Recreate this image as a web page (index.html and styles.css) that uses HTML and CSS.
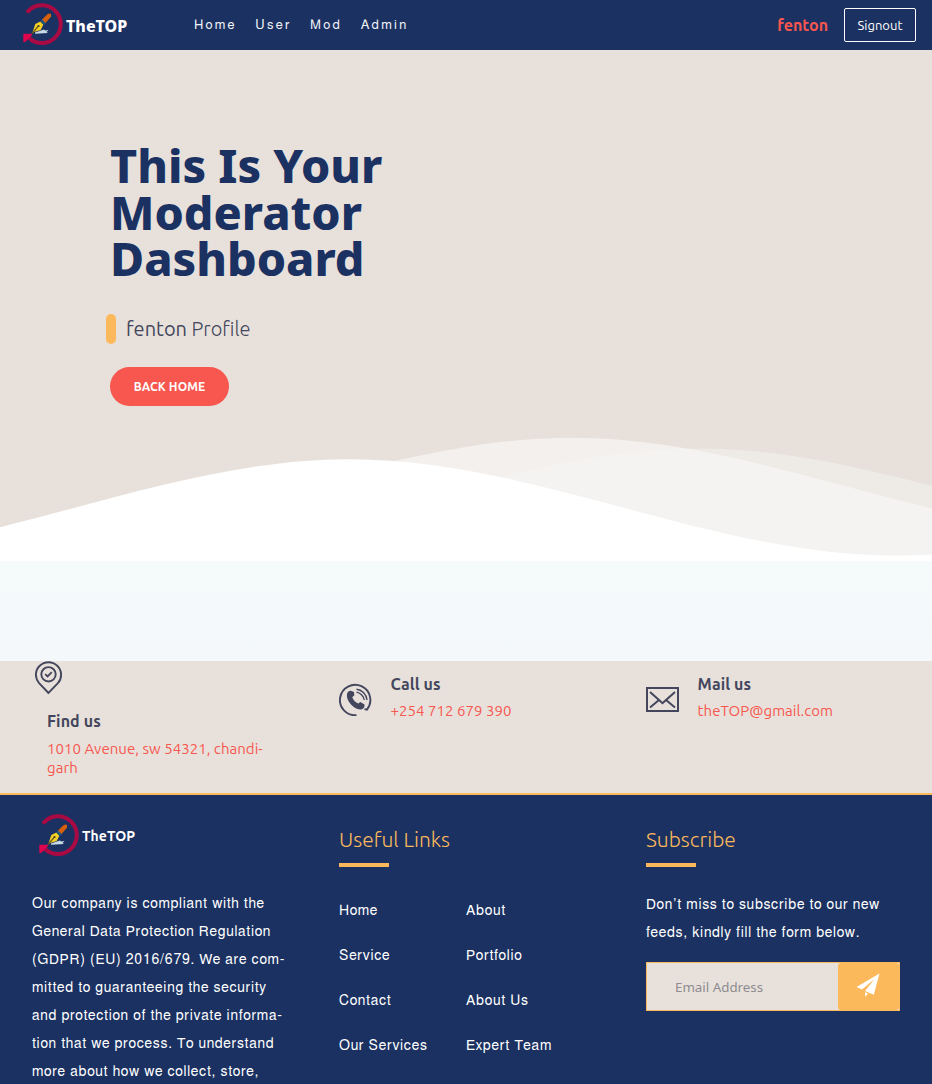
FILE: index.html
```html
<!DOCTYPE html>
<html lang="en">
<head>
<meta charset="utf-8">
<title>TheTOP</title>
<link rel="stylesheet" href="styles.css">
</head>
<body>
<svg class="defs" width="0" height="0" aria-hidden="true">
  <symbol id="logo" viewBox="0 0 44 46">
    <path d="M6 10.300A18.900 18.900 0 1 1 6.500 36.500" fill="none" stroke="#a90a43" stroke-width="4" stroke-linecap="round"/>
    <path d="M1.300 32.700H10V34L7.300 36.800 5 39 3.300 41H1.300z" fill="#e0044f"/>
    <path d="M13 31.500l9-3 1 1 3.500-.5-2 2 1.500 1-13 .7z" fill="#c9dbe6"/>
    <path d="M10.500 31.500l2.800-8.500 5-2.500 3 3.300-2.600 5.200z" fill="#f5cf25"/>
    <path d="M10 32.500l6-7" stroke="#6b5a1d" stroke-width="1.200"/>
    <circle cx="16.500" cy="25" r="1.100" fill="#3a3a20"/>
    <path d="M18.500 20l1.500-1.500 4 3.800-1.700 1.700z" fill="#1d5a80"/>
    <path d="M20 18.500l6-5.800h3v3l-5.500 6.300z" fill="#d6600b"/>
  </symbol>
</svg>
<header class="navbar">
  <a class="brand"><svg class="brand-mark"><use href="#logo"/></svg><span class="brand-name">TheTOP</span></a>
  <nav class="nav-links"><a>Home</a><a>User</a><a>Mod</a><a>Admin</a></nav>
  <div class="account"><span class="username">fenton</span><button class="signout">Signout</button></div>
</header>

<main class="hero">
  <h1 class="hero-title">This Is Your<br>Moderator<br>Dashboard</h1>
  <p class="profile"><i class="profile-bar"></i><span class="profile-text"><span class="profile-name">fenton</span> Profile</span></p>
  <a class="back-home">BACK HOME</a>
  <svg class="waves" viewBox="0 24 150 28" preserveAspectRatio="none">
    <defs><path id="wave" d="M-160 44c30 0 58-18 88-18s58 18 88 18 58-18 88-18 58 18 88 18 58-18 88-18v62h-440z"/></defs>
    <use href="#wave" x="-12" y="3" fill="rgba(255,255,255,.5)"/>
    <use href="#wave" x="8.500" y="5" fill="rgba(248,248,247,.4)"/>
    <use href="#wave" x="-47.800" y="7" fill="#fff"/>
  </svg>
</main>
<div class="spacer"></div>

<section class="contacts">
  <div class="contact contact-address">
    <svg class="icon-pin" viewBox="0 0 28 34" fill="none" stroke="#43465c" stroke-width="1.900">
      <path d="M13.500 32L4.100 22.200A12.600 12.600 0 1 1 22.900 22.200z"/>
      <circle cx="13.500" cy="13.300" r="7.200"/><path d="M10.200 13.100l2.400 2.400 4.200-4.300"/>
    </svg>
    <div class="contact-text"><h4>Find us</h4><span class="address">1010 Avenue, sw 54321, chandi-<br>garh</span></div>
  </div>
  <div class="contact">
    <svg class="icon" viewBox="-.5 -.5 33 33" fill="none" stroke="#43465c">
      <path d="M17 31.700A15.200 15.200 0 1 1 27.400 26.200L25 25.600" stroke-width="1.900"/>
      <path d="M11.500 7.300l3 1.200.3 3.500-2 1.500c.5 2.500 3.500 5.700 6 6.500l2-1.500 4.200 2.500c.6 4-3 6-7 4.500C12 23.500 6.500 16 7.500 10.500c.5-2.200 2-3.300 4-3.200z" fill="#43465c" stroke="none"/>
      <path d="M17 5.700c5 .3 10 5 10.500 10.800M17 8.600c3.500.4 7.300 4 7.700 7.900" stroke-width="1.400"/>
    </svg>
    <div class="contact-text"><h4>Call us</h4><span class="phone">+254 712 679 390</span></div>
  </div>
  <div class="contact">
    <svg class="icon" viewBox="0 0 33 33" fill="none" stroke="#43465c" stroke-width="2">
      <path d="M1 5H32V28H1z"/><path d="M4 9l9 8 3.500 3.200 3.500-3.200 9-8M4 24.500l9-7.500M29 24.500l-9-7.500"/>
    </svg>
    <div class="contact-text"><h4>Mail us</h4><span class="mail">theTOP@gmail.com</span></div>
  </div>
</section>

<footer class="footer">
  <div class="about">
    <a class="footer-brand"><svg class="brand-mark"><use href="#logo"/></svg><span class="footer-name">TheTOP</span></a>
    <p class="copy">Our company is compliant with the<br>General Data Protection Regulation<br>(GDPR) (EU) 2016/679. We are com-<br>mitted to guaranteeing the security<br>and protection of the private informa-<br>tion that we process. To understand<br>more about how we collect, store,</p>
  </div>
  <div>
    <h3 class="footer-title">Useful Links</h3>
    <div class="links"><a>Home</a><a>About</a><a>Service</a><a>Portfolio</a><a>Contact</a><a>About Us</a><a>Our Services</a><a>Expert Team</a></div>
  </div>
  <div>
    <h3 class="footer-title">Subscribe</h3>
    <p class="copy subscribe-copy">Don’t miss to subscribe to our new<br>feeds, kindly fill the form below.</p>
    <form class="subscribe">
      <input class="email" type="text" placeholder="Email Address">
      <button class="send" type="button"><svg width="24" height="24" viewBox="0 0 24 24"><path fill="#fff" d="M23.500 .5L.5 14l5.500 2.600L18.500 6 9 18l8.800 3.800zM9 19.200l3.200 1.400L9 23.700z"/></svg></button>
    </form>
  </div>
</footer>
</body>
</html>
```
FILE: styles.css
```css
* { box-sizing: border-box; }
body { margin: 0; height: 1084px; overflow: hidden; font-family: Ubuntu, "Noto Sans", sans-serif; background: #fff; }
h1, h3, h4, p { margin: 0; }
.defs { display: block; }
.navbar { display: flex; align-items: center; height: 50px; padding: 0 16px 0 22px; background: #1b3162; }
.brand { display: flex; align-items: center; width: 172px; height: 50px; }
.brand-mark { width: 44px; height: 46px; margin-top: -2px; flex: none; }
.brand-name { font: 800 16px "Noto Sans", sans-serif; color: #fff; margin-top: 1px; }
.nav-links { display: flex; gap: 18.500px; font: 13px "Nimbus Sans", "Nimbus Sans L", FreeSans, "Liberation Sans", sans-serif; letter-spacing: 2.350px; color: #f1f3f8; margin-top: 1px; }
.account { display: flex; align-items: center; margin-left: auto; gap: 16px; }
.username { font-size: 16px; font-weight: 700; color: #f7574f; }
.signout { width: 72px; height: 34px; padding: 0; border: 1px solid #fff; border-radius: 2px; background: none; color: #fff; font: 13px Ubuntu, "Noto Sans", sans-serif; }

.hero { position: relative; height: 511px; padding: 92px 110px 0; background: #e8e1db; }
.hero-title { font: 800 46.600px/46.600px "Noto Sans", sans-serif; color: #1b3162; }
.profile { display: flex; align-items: center; gap: 10px; height: 30px; margin: 32px 0 0 -4px; color: #43465c; }
.profile-bar { width: 10px; height: 30px; border-radius: 5px; background: #fcb95b; }
.profile-text { font: 300 20px Ubuntu, "Open Sans", sans-serif; white-space: nowrap; }
.profile-name { font-weight: 400; }
.back-home { display: flex; align-items: center; justify-content: center; width: 119px; height: 39px; margin-top: 23px; border-radius: 20px; background: #f7574f; color: #fff; font-size: 12px; font-weight: 700; letter-spacing: .1px; }
.waves { position: absolute; left: 0; bottom: 0; width: 100%; height: 150px; }
.spacer { height: 100px; background: linear-gradient(#f5fafb, #f4f8fa); }

.contacts { display: grid; grid-template-columns: repeat(3, minmax(0, 1fr)); gap: 53px; height: 134px; padding: 0 32px; background: #e8e1db; border-bottom: 2px solid #fcb95b; color: #f7574f; }
.contact { display: flex; gap: 18.600px; padding-top: 12px; white-space: nowrap; font-size: 15px; line-height: 19px; letter-spacing: .04px; }
.contact h4 { font-size: 16px; line-height: 22px; margin-bottom: 6px; color: #43465c; letter-spacing: .1px; }
.contact-address { flex-direction: column; gap: 15.500px; padding: 0 0 0 2.500px; }
.contact-address .contact-text { padding-left: 12.500px; }
.contact-address h4 { margin-bottom: 7px; }
.icon-pin { width: 28px; height: 34px; margin-top: -.500px; flex: none; }
.icon { width: 33px; height: 33px; margin-top: 10px; flex: none; }

.footer { display: grid; grid-template-columns: repeat(3, minmax(0, 1fr)); gap: 53px; height: 289px; padding: 0 32px; background: #1b3162; overflow: hidden; }
.footer-brand { display: flex; align-items: center; padding: 19px 0 0 6px; }
.footer-name { color: #fff; font-size: 14px; font-weight: 700; letter-spacing: .1px; }
.copy { margin-top: 32px; font: 14px/28px "Nimbus Sans", "Nimbus Sans L", FreeSans, "Liberation Sans", sans-serif; letter-spacing: .8px; color: #fff; white-space: nowrap; }
.footer-title { padding-top: 28px; font: 300 21px/32px Ubuntu, "Open Sans", sans-serif; color: #fcb95b; white-space: nowrap; }
.footer-title::after { content: ""; display: block; width: 50px; height: 4px; margin-top: 8px; background: #fcb95b; }
.links { display: grid; grid-template-columns: 1fr 1fr; grid-auto-rows: 45px; align-items: center; margin-top: 22px; font: 14px "Nimbus Sans", "Nimbus Sans L", FreeSans, "Liberation Sans", sans-serif; letter-spacing: .8px; color: #fff; white-space: nowrap; }
.subscribe-copy { margin-top: 24px; }
.subscribe { display: flex; height: 49px; margin-top: 15px; border: 1px solid #fcb95b; background: #e8e1db; }
.email { flex: 1; min-width: 0; padding: 0 0 0 28px; border: 0; background: none; font: 13.333px "Noto Sans", sans-serif; }
.email::placeholder { color: #8e8b91; }
.send { display: flex; align-items: center; justify-content: center; width: 61px; padding: 0 1px 4px 0; border: 0; border-radius: 3px; background: #fcb95b; }
```
